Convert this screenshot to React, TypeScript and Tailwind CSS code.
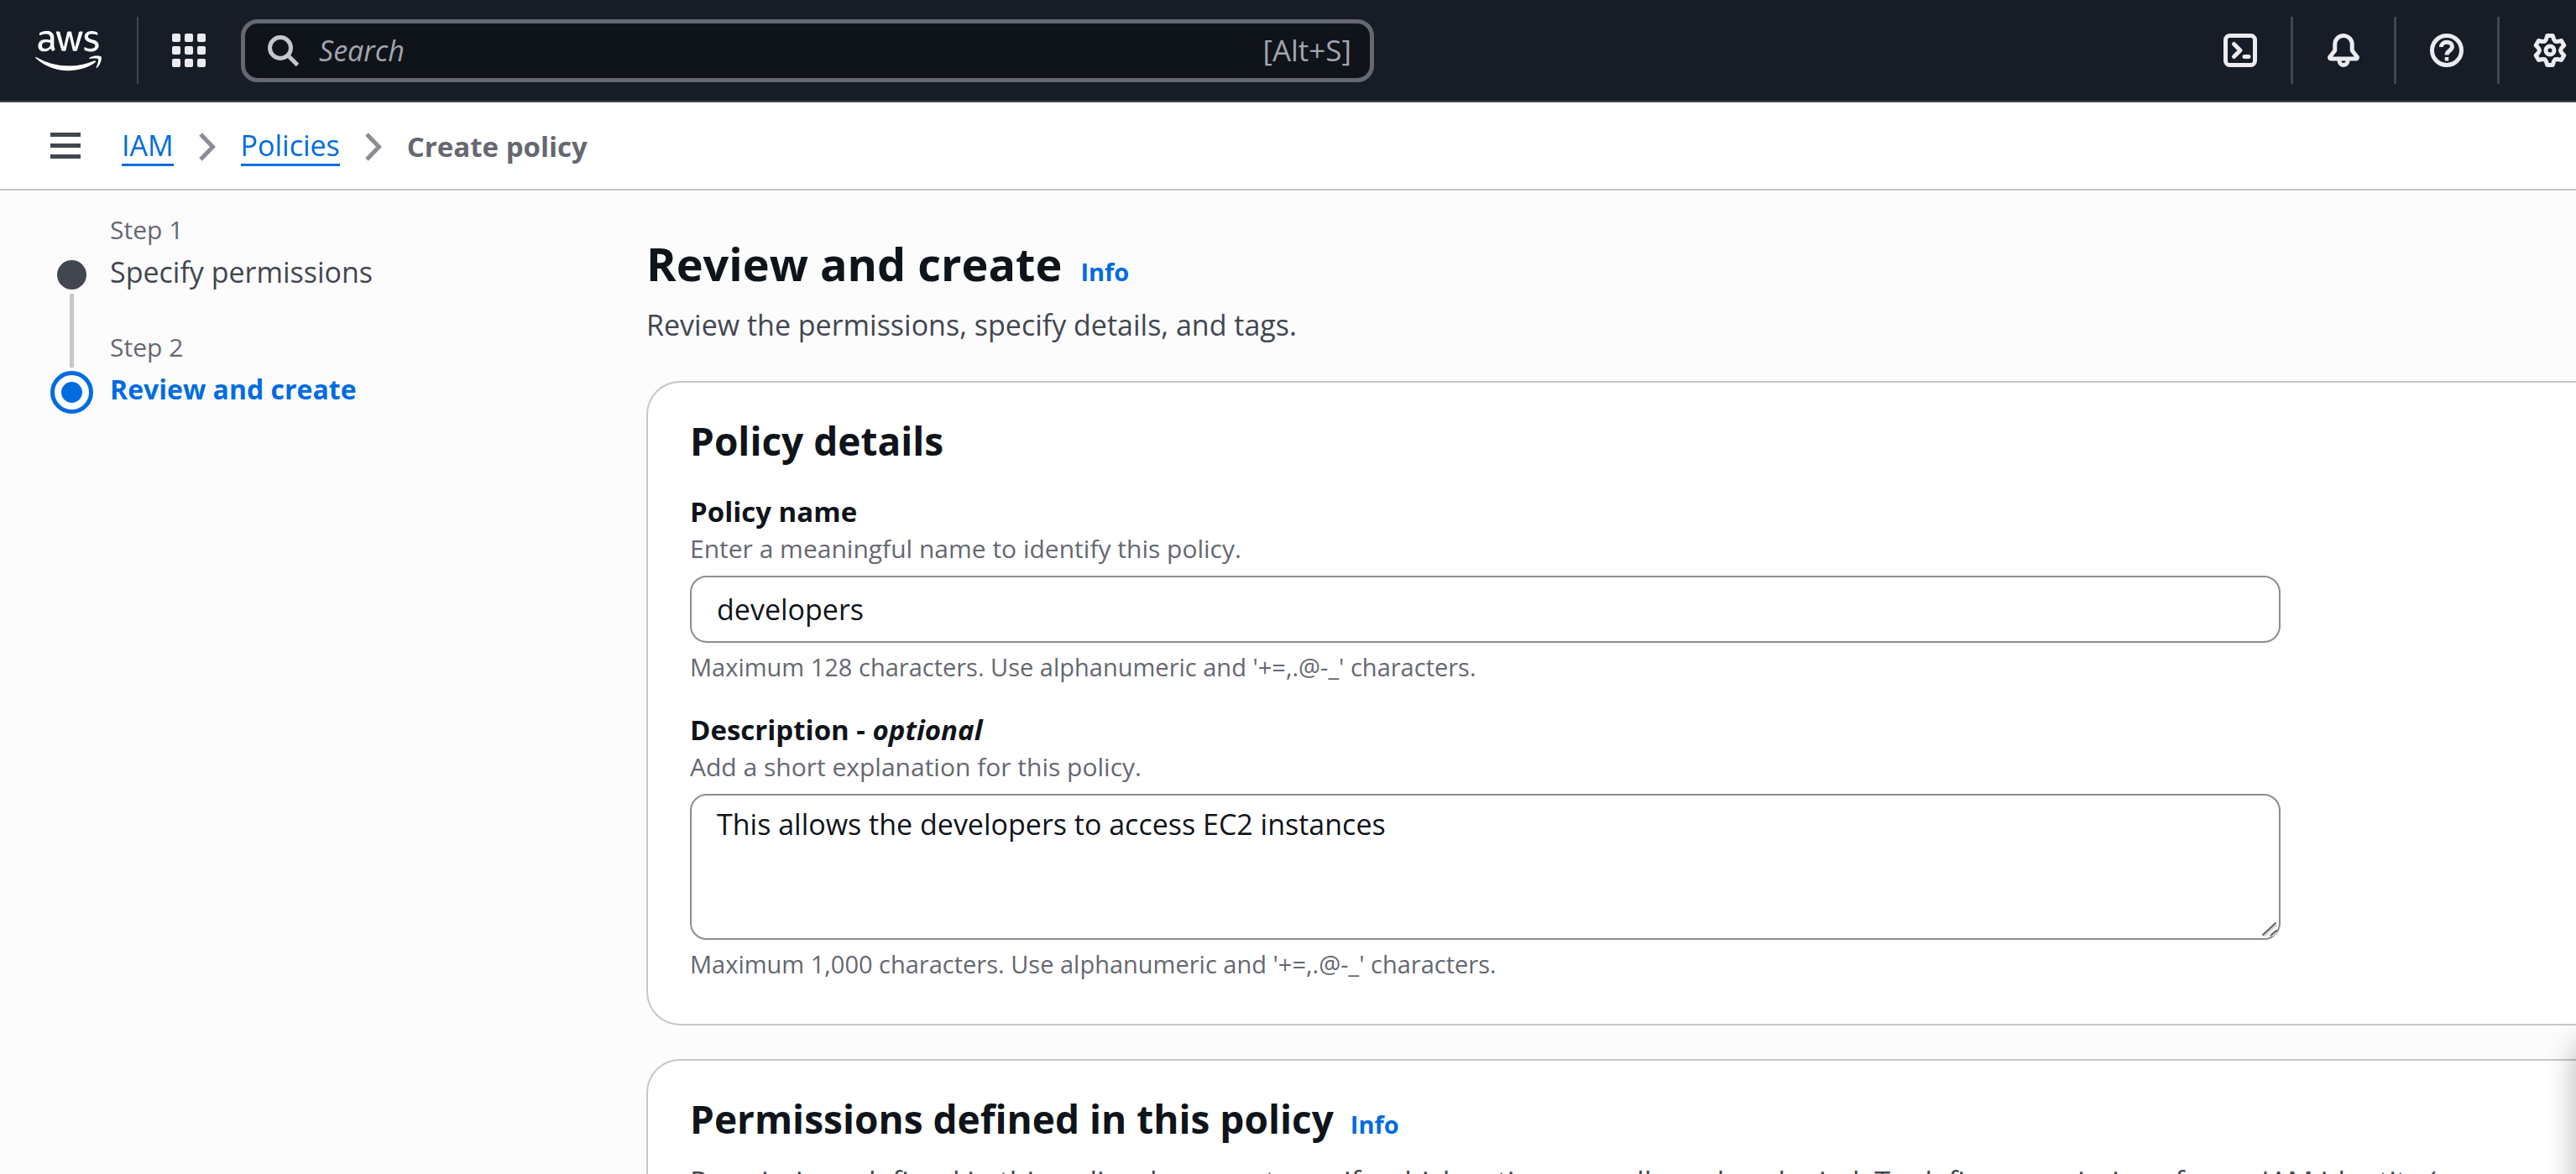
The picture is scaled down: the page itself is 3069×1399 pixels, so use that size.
import React from "react";
import { FaAws } from "react-icons/fa";

const gearPath = (() => {
  const points: string[] = [];
  const add = (angle: number, radius: number, side: number) => {
    const x = 8 + radius * Math.cos(angle) - side * Math.sin(angle);
    const y = 8 + radius * Math.sin(angle) + side * Math.cos(angle);
    points.push(`${x.toFixed(2)} ${y.toFixed(2)}`);
  };
  for (let tooth = 0; tooth < 6; tooth++) {
    const angle = ((tooth * 60 - 90) * Math.PI) / 180;
    add(angle, 5.3, -1.8);
    add(angle, 7, -1.3);
    add(angle, 7, 1.3);
    add(angle, 5.3, 1.8);
    add(angle + Math.PI / 6, 5, 0);
  }
  return `M${points.join("L")}Z`;
})();

function NavIcon({ label, children }: { label: string; children: React.ReactNode }) {
  return (
    <button type="button" aria-label={label} className="shrink-0 text-[#ebebf0]">
      <svg
        viewBox="0 0 16 16"
        className="size-10"
        fill="none"
        stroke="currentColor"
        strokeWidth="2"
        strokeLinejoin="round"
      >
        {children}
      </svg>
    </button>
  );
}

function Separator() {
  return <div className="h-20 w-[3px] shrink-0 bg-[#424650]" />;
}

function TopNav() {
  return (
    <header className="flex shrink-0 items-center border-b-2 border-[#424650] bg-[#161d26] pr-[11px] pl-[42px]">
      <a href="#home" aria-label="AWS home" className="text-white">
        <FaAws className="h-[63px] w-[79px]" />
      </a>
      <div className="my-5 ml-[42px] h-20 w-[2px] bg-[#424650]" />
      <button type="button" aria-label="Services" className="ml-10 grid grid-cols-3 gap-[5px]">
        {Array.from({ length: 9 }, (_, i) => (
          <span key={i} className="size-[10px] rounded-[2px] bg-[#ebebf0]" />
        ))}
      </button>
      <label className="ml-[42px] flex h-[75px] w-full max-w-[1350px] items-center rounded-[20px] border-[5px] border-[#656871] bg-[#0f141a] pr-[22px] pl-[27px] text-[35px] text-[#a4a4ad]">
        <svg viewBox="0 0 37 37" className="size-[37px] shrink-0" fill="none" stroke="#c6c6cd" strokeWidth="5">
          <circle cx="15" cy="15" r="12.5" />
          <path d="M23 23 35.5 35.5" />
        </svg>
        <input
          type="search"
          aria-label="Search"
          placeholder="Search"
          className="ml-6 min-w-0 flex-1 bg-transparent text-[34px] outline-none placeholder:text-[#a4a4ad] placeholder:italic"
        />
        <span>[Alt+S]</span>
      </label>
      <nav aria-label="Account tools" className="ml-auto flex items-center gap-10">
        <NavIcon label="CloudShell">
          <rect x="1" y="1" width="14" height="14" rx="2" />
          <path d="m5 5 3 3-3 3M10 11h2" strokeLinecap="round" />
        </NavIcon>
        <Separator />
        <NavIcon label="Notifications">
          <path d="M8 1a4.1 4.1 0 0 0-4.1 4.1v3L1.6 11c-.4.5-.1 1 .4 1h12c.5 0 .8-.5.4-1l-2.3-2.9v-3A4.1 4.1 0 0 0 8 1Z" />
          <path d="M6 12v1a2 2 0 0 0 4 0v-1" />
        </NavIcon>
        <Separator />
        <NavIcon label="Help">
          <circle cx="8" cy="8" r="7" />
          <path d="M5.4 6.4C5.4 5 6.5 4.100 8 4.100s2.600.9 2.600 2.200c0 1.700-2.600 1.900-2.600 3.900" />
          <path d="M7.100 11.200h1.800V13H7.100z" fill="currentColor" stroke="none" />
        </NavIcon>
        <Separator />
        <NavIcon label="Settings">
          <path d={gearPath} />
          <circle cx="8" cy="8" r="2" />
        </NavIcon>
      </nav>
    </header>
  );
}

function Chevron() {
  return (
    <svg viewBox="0 0 20 34" className="mx-[30px] h-[34px] w-5" fill="none" stroke="#8c8c94" strokeWidth="5">
      <path d="M2 2 16.500 17 2 32" />
    </svg>
  );
}

function Breadcrumbs() {
  return (
    <div className="flex h-[105px] shrink-0 items-center border-b-2 border-[#c6c6cd] bg-white pl-[60px]">
      <button type="button" aria-label="Open navigation" className="flex w-9 flex-col gap-2">
        <span className="h-[5px] bg-[#424650]" />
        <span className="h-[5px] bg-[#424650]" />
        <span className="h-[5px] bg-[#424650]" />
      </button>
      <nav aria-label="Breadcrumbs" className="ml-[49px] flex items-center pt-[2px] text-[34px] leading-[44px]">
        <a href="#iam" className="border-b-[3px] border-[#006ce0] text-[#006ce0]">IAM</a>
        <Chevron />
        <a href="#policies" className="border-b-[3px] border-[#006ce0] text-[#006ce0]">Policies</a>
        <Chevron />
        <span aria-current="page" className="text-[33px] font-bold text-[#656871]">Create policy</span>
      </nav>
    </div>
  );
}

function Steps() {
  return (
    <ol className="w-[710px] shrink-0 pt-[22px]">
      <li className="flex h-[140px] gap-5">
        <div className="flex w-[51px] flex-col items-center">
          <div className="mt-[61px] mb-[5px] size-[35px] shrink-0 rounded-full bg-[#424650]" />
          <div className="w-[5px] flex-1 bg-[#c6c6cd]" />
        </div>
        <div className="leading-[50px]">
          <div className="text-[30px] text-[#656871]">Step 1</div>
          <a href="#permissions" className="text-[34px] text-[#424650]">Specify permissions</a>
        </div>
      </li>
      <li className="flex h-[140px] gap-5">
        <div className="flex w-[51px] flex-col items-center gap-1">
          <div className="h-[49px] w-[5px] bg-[#c6c6cd]" />
          <div className="flex size-[51px] items-center justify-center rounded-full border-[5px] border-[#006ce0] bg-white">
            <div className="size-[25px] rounded-full bg-[#006ce0]" />
          </div>
        </div>
        <div className="leading-[50px]">
          <div className="text-[30px] text-[#656871]">Step 2</div>
          <a href="#review" aria-current="step" className="text-[32px] font-bold text-[#006ce0]">Review and create</a>
        </div>
      </li>
    </ol>
  );
}

function Info() {
  return <a href="#info" className="text-[29px] font-bold text-[#006ce0]">Info</a>;
}

function Card({ children }: { children: React.ReactNode }) {
  return (
    <section className="rounded-l-[40px] border-2 border-r-0 border-[#c6c6cd] bg-white pt-[39px] pb-[51px] pl-[50px]">
      {children}
    </section>
  );
}

function Field({
  id,
  label,
  hint,
  constraint,
  children,
}: {
  id: string;
  label: React.ReactNode;
  hint: string;
  constraint: string;
  children: React.ReactNode;
}) {
  return (
    <div className="mt-[31px] flex max-w-[1895px] flex-col">
      <label htmlFor={id} className="text-[33px] leading-[48px] font-bold">{label}</label>
      <p className="mb-3 text-[30px] leading-[40px] text-[#656871]">{hint}</p>
      {children}
      <p className="mt-[9px] text-[29px] leading-[40px] text-[#656871]">{constraint}</p>
    </div>
  );
}

function Content() {
  return (
    <div className="min-w-0 flex-1 pt-[57px]">
      <div className="flex items-baseline gap-[22px]">
        <h1 className="text-[54px] leading-[60px] font-[670]">Review and create</h1>
        <Info />
      </div>
      <p className="mt-4 text-[34px] leading-[50px] text-[#424650]">
        Review the permissions, specify details, and tags.
      </p>
      <div className="mt-[42px] flex flex-col gap-10">
        <Card>
          <h2 className="text-[46px] leading-[60px] font-[670]">Policy details</h2>
          <Field
            id="policy-name"
            label="Policy name"
            hint="Enter a meaningful name to identify this policy."
            constraint="Maximum 128 characters. Use alphanumeric and '+=,.@-_' characters."
          >
            <input
              id="policy-name"
              type="text"
              defaultValue="developers"
              className="h-20 rounded-[20px] border-2 border-[#8c8c94] bg-white px-[30px] text-[34px] outline-none"
            />
          </Field>
          <Field
            id="policy-description"
            label={<>Description - <i>optional</i></>}
            hint="Add a short explanation for this policy."
            constraint="Maximum 1,000 characters. Use alphanumeric and '+=,.@-_' characters."
          >
            <div className="relative flex">
              <textarea
                id="policy-description"
                defaultValue="This allows the developers to access EC2 instances"
                className="h-[174px] w-full resize-none rounded-[20px] border-2 border-[#8c8c94] bg-white px-[30px] py-[9px] text-[34px] leading-[50px] outline-none"
              />
              <svg
                viewBox="0 0 20 18"
                className="pointer-events-none absolute right-[3px] bottom-1 h-[18px] w-5"
                fill="none"
                strokeWidth="2"
                strokeLinecap="round"
              >
                <path d="M4 17 18 4.500M14 17 18 13.500" stroke="#d4d4d4" />
                <path d="M2 16 17 2M11.500 16.500 18 11" stroke="#5f5f5f" />
              </svg>
            </div>
          </Field>
        </Card>
        <Card>
          <div className="flex items-baseline gap-5">
            <h2 className="text-[46px] leading-[60px] font-[670]">Permissions defined in this policy</h2>
            <Info />
          </div>
          <p className="mt-5 pr-[50px] text-[34px] leading-[50px] text-[#424650]">
            Permissions defined in this policy document specify which actions are allowed or denied. To define
            permissions for an IAM identity (user, user group, or role), attach a policy to it
          </p>
        </Card>
      </div>
    </div>
  );
}

export default function App() {
  return (
    <div className="relative flex h-screen flex-col overflow-hidden bg-[#fcfcfd] font-['Open_Sans',sans-serif] text-[#0f141a]">
      <TopNav />
      <Breadcrumbs />
      <main className="flex min-h-0 flex-1 overflow-hidden pl-[60px]">
        <Steps />
        <Content />
      </main>
      <div className="absolute -right-16 -bottom-16 h-[220px] w-16 rounded-l-[20px] shadow-[0_0_36px_rgba(0,0,0,0.3)]" />
    </div>
  );
}
